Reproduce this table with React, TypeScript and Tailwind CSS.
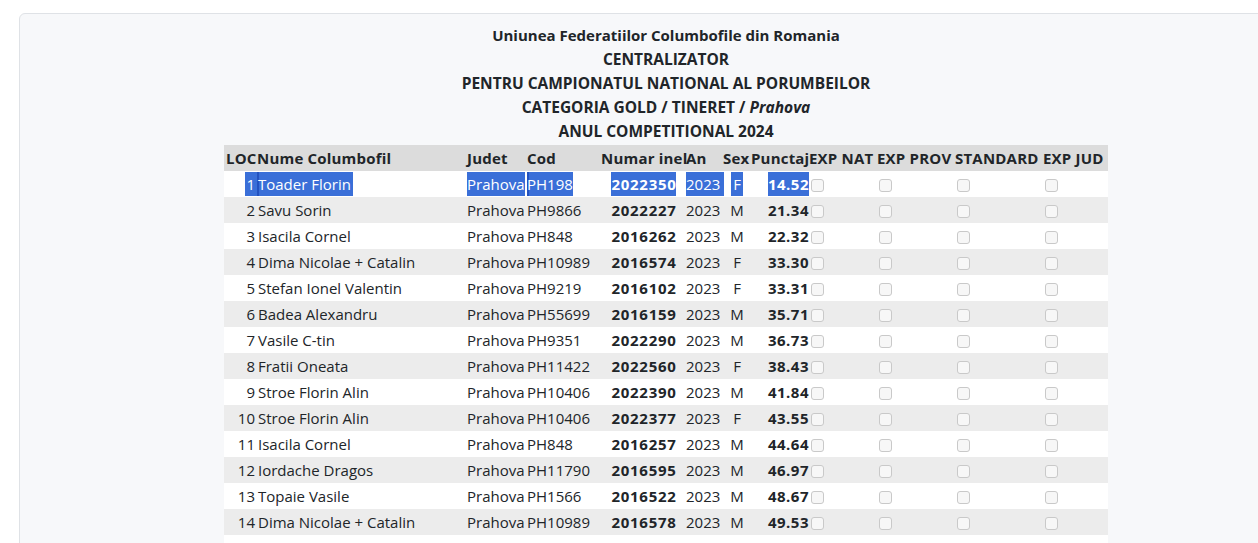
import React from 'react';

type Row = {
  loc: number;
  nume: string;
  judet: string;
  cod: string;
  inel: string;
  an: string;
  sex: string;
  punctaj: string;
};

const rows: Row[] = [
  { loc: 1, nume: 'Toader Florin', judet: 'Prahova', cod: 'PH198', inel: '2022350', an: '2023', sex: 'F', punctaj: '14.52' },
  { loc: 2, nume: 'Savu Sorin', judet: 'Prahova', cod: 'PH9866', inel: '2022227', an: '2023', sex: 'M', punctaj: '21.34' },
  { loc: 3, nume: 'Isacila Cornel', judet: 'Prahova', cod: 'PH848', inel: '2016262', an: '2023', sex: 'M', punctaj: '22.32' },
  { loc: 4, nume: 'Dima Nicolae + Catalin', judet: 'Prahova', cod: 'PH10989', inel: '2016574', an: '2023', sex: 'F', punctaj: '33.30' },
  { loc: 5, nume: 'Stefan Ionel Valentin', judet: 'Prahova', cod: 'PH9219', inel: '2016102', an: '2023', sex: 'F', punctaj: '33.31' },
  { loc: 6, nume: 'Badea Alexandru', judet: 'Prahova', cod: 'PH55699', inel: '2016159', an: '2023', sex: 'M', punctaj: '35.71' },
  { loc: 7, nume: 'Vasile C-tin', judet: 'Prahova', cod: 'PH9351', inel: '2022290', an: '2023', sex: 'M', punctaj: '36.73' },
  { loc: 8, nume: 'Fratii Oneata', judet: 'Prahova', cod: 'PH11422', inel: '2022560', an: '2023', sex: 'F', punctaj: '38.43' },
  { loc: 9, nume: 'Stroe Florin Alin', judet: 'Prahova', cod: 'PH10406', inel: '2022390', an: '2023', sex: 'M', punctaj: '41.84' },
  { loc: 10, nume: 'Stroe Florin Alin', judet: 'Prahova', cod: 'PH10406', inel: '2022377', an: '2023', sex: 'F', punctaj: '43.55' },
  { loc: 11, nume: 'Isacila Cornel', judet: 'Prahova', cod: 'PH848', inel: '2016257', an: '2023', sex: 'M', punctaj: '44.64' },
  { loc: 12, nume: 'Iordache Dragos', judet: 'Prahova', cod: 'PH11790', inel: '2016595', an: '2023', sex: 'M', punctaj: '46.97' },
  { loc: 13, nume: 'Topaie Vasile', judet: 'Prahova', cod: 'PH1566', inel: '2016522', an: '2023', sex: 'M', punctaj: '48.67' },
  { loc: 14, nume: 'Dima Nicolae + Catalin', judet: 'Prahova', cod: 'PH10989', inel: '2016578', an: '2023', sex: 'M', punctaj: '49.53' },
  { loc: 15, nume: 'Neagu Gabriel Ionelli', judet: 'Prahova', cod: 'PH7712', inel: '2016540', an: '2023', sex: 'M', punctaj: '51.08' },
];

const headers = ['LOC', 'Nume Columbofil', 'Judet', 'Cod', 'Numar inel', 'An', 'Sex', 'Punctaj', 'EXP NAT', 'EXP PROV', 'STANDARD', 'EXP JUD'];
const widths = ['w-[33px]', 'w-[210px]', 'w-[60px]', 'w-[74px]', 'w-[85px]', 'w-[37px]', 'w-[28px]', 'w-[58px]', 'w-[68px]', 'w-[78px]', 'w-[88px]', 'w-[65px]'];

const Box = () => (
  <span className="ml-[2px] inline-block h-[13px] w-[13px] rounded-[3px] border border-[#c9c9c9] bg-[#f7f7f7] align-middle" />
);

// cell text; on the first row it looks like a text selection
const Sel: React.FC<{ on: boolean; seam?: boolean; className?: string; children: React.ReactNode }> = ({ on, seam, className = '', children }) => (
  <span
    className={`inline-block h-[24px] leading-[24px] ${on ? 'bg-[#3a6fd8] text-white' : ''} ${on && seam ? 'shadow-[inset_2px_0_0_#2352c0]' : ''} ${className}`}
  >
    {children}
  </span>
);

export default function App() {
  return (
    <div className="h-[543px] w-[1258px] overflow-hidden bg-white text-[15px] leading-[24px] text-[#212529]" style={{ fontFamily: '"Open Sans", "Noto Sans", sans-serif' }}>
      <div className="ml-[19px] mt-[13px] w-[1294px] rounded-md border border-[#dfe2e6] bg-[#f7f8fa] pt-[9px] pb-4">
        <div className="text-center font-bold">
          <div>Uniunea Federatiilor Columbofile din Romania</div>
          <div className="text-[15.5px]">CENTRALIZATOR</div>
          <div className="text-[15.5px]">PENTRU CAMPIONATUL NATIONAL AL PORUMBEILOR</div>
          <div className="text-[15.5px]">
            CATEGORIA GOLD / TINERET / <i>Prahova</i>
          </div>
          <div className="text-[15.5px]">ANUL COMPETITIONAL 2024</div>
        </div>

        <table className="mx-auto mt-[2px] w-[884px] table-fixed border-collapse">
          <colgroup>
            {widths.map((w, i) => (
              <col key={i} className={w} />
            ))}
          </colgroup>
          <thead>
            <tr className="h-[26px] bg-[#dcdcdc]">
              {headers.map((h, i) => (
                <th key={h} className={`whitespace-nowrap p-0 text-left font-bold tracking-[0.2px] ${i === 0 ? 'pl-[2px]' : ''}`}>
                  {h}
                </th>
              ))}
            </tr>
          </thead>
          <tbody>
            {rows.map((r) => {
              const s = r.loc === 1;
              return (
                <tr key={r.loc} className={`h-[26px] ${r.loc % 2 === 0 ? 'bg-[#ececec]' : 'bg-white'}`}>
                  <td className="p-0 text-right">
                    <Sel on={s} className="pl-[1px] pr-[2px]">{r.loc}</Sel>
                  </td>
                  <td className="whitespace-nowrap p-0">
                    <Sel on={s} seam className="pl-[1px] pr-[2px]">{r.nume}</Sel>
                  </td>
                  <td className="p-0">
                    <Sel on={s}>{r.judet}</Sel>
                  </td>
                  <td className="p-0">
                    <Sel on={s} seam>{r.cod}</Sel>
                  </td>
                  <td className="p-0 text-center font-bold tracking-[0.7px]">
                    <Sel on={s} className="pl-[1px]">{r.inel}</Sel>
                  </td>
                  <td className="p-0">
                    <Sel on={s} className="pr-[4px]">{r.an}</Sel>
                  </td>
                  <td className="p-0 text-center">
                    <Sel on={s} className="px-[2px]">{r.sex}</Sel>
                  </td>
                  <td className="p-0 text-right font-bold tracking-[0.5px]">
                    <Sel on={s}>{r.punctaj}</Sel>
                  </td>
                  <td className="p-0"><Box /></td>
                  <td className="p-0"><Box /></td>
                  <td className="p-0"><Box /></td>
                  <td className="p-0"><Box /></td>
                </tr>
              );
            })}
          </tbody>
        </table>
      </div>
    </div>
  );
}
